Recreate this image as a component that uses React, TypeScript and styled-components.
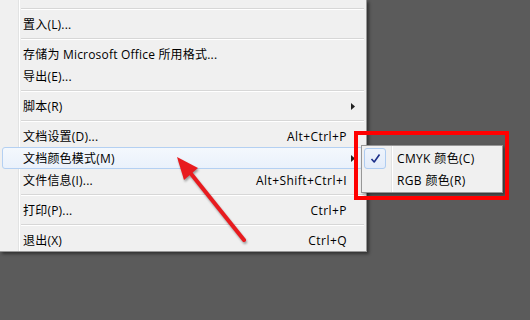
import React, { FunctionComponent } from "react"
import styled, { createGlobalStyle, css } from "styled-components"

const GlobalStyle = createGlobalStyle`
  html, body {
    margin: 0;
    padding: 0;
    background: #5b5b5b;
    overflow: hidden;
  }
`

const FONT = `"Open Sans", "Noto Sans CJK SC", sans-serif`

const Stage = styled.div`
  position: relative;
  width: 530px;
  height: 320px;
  background: #5b5b5b;
  font-family: ${FONT};
  font-size: 12px;
  letter-spacing: 0.2px;
  color: #000;
  overflow: hidden;
`

const Menu = styled.div`
  width: 366px;
  padding-top: 5px;
  background-color: #f0f0f0;
  background-image: linear-gradient(
    to right,
    transparent 18px,
    #e2e3e3 18px,
    #e2e3e3 19px,
    #ffffff 19px,
    #ffffff 20px,
    transparent 20px
  );
  border-right: 1px solid #979797;
  border-bottom: 1px solid #979797;
  box-shadow: 2px 2px 3px rgba(0, 0, 0, 0.45);
`

const Item = styled.div<{ $active?: boolean }>`
  display: flex;
  align-items: center;
  height: 20px;
  margin: 0 3px 0 2px;
  padding-left: 20px;
  border: 1px solid transparent;
  border-radius: 3px;
  white-space: nowrap;
  ${(p) =>
    p.$active &&
    css`
      border-color: #b4d0f2;
      background: linear-gradient(to bottom, #f4f8fd, #eaf1fb);
    `}
`

const Label = styled.span`
  flex: 1;
`

const Shortcut = styled.span`
  text-align: right;
  letter-spacing: 0.45px;
`

const ArrowSlot = styled.span`
  display: flex;
  align-items: center;
  width: 15px;
  padding-left: 4px;
  box-sizing: border-box;
`

const Separator = styled.div`
  height: 8px;
  margin: 0 2px 0 21px;
  background: linear-gradient(
    to bottom,
    transparent 3px,
    #d7d7d7 3px,
    #d7d7d7 4px,
    #ffffff 4px,
    #ffffff 5px,
    transparent 5px
  );
`

const SubMenu = styled.div`
  position: absolute;
  left: 361px;
  top: 145px;
  width: 140px;
  padding: 1px 0;
  background-color: #f0f0f0;
  background-image: linear-gradient(
    to right,
    transparent 29px,
    #e2e3e3 29px,
    #e2e3e3 30px,
    #ffffff 30px,
    #ffffff 31px,
    transparent 31px
  );
  border: 1px solid #979797;
  box-shadow: 2px 2px 3px rgba(0, 0, 0, 0.4);
`

const SubItem = styled.div`
  display: flex;
  align-items: center;
  height: 22px;
  padding-left: 2px;
  white-space: nowrap;
  letter-spacing: 0.35px;
`

const CheckSlot = styled.span<{ $checked?: boolean }>`
  display: flex;
  align-items: center;
  justify-content: center;
  width: 20px;
  height: 19px;
  margin-right: 11px;
  border: 1px solid transparent;
  border-radius: 3px;
  ${(p) =>
    p.$checked &&
    css`
      border-color: #aeccf1;
      background: linear-gradient(to bottom, #eef4fc, #e3ecfa);
    `}
`

const Callout = styled.div`
  position: absolute;
  left: 354px;
  top: 131px;
  width: 147px;
  height: 61px;
  border: 4px solid #ff0000;
  pointer-events: none;
`

const Pointer = styled.svg`
  position: absolute;
  left: 0;
  top: 0;
  width: 530px;
  height: 320px;
  pointer-events: none;
  filter: drop-shadow(1px 2px 1px rgba(0, 0, 0, 0.35));
`

const SubArrow: FunctionComponent = () => (
  <svg width="4" height="7" viewBox="0 0 4 7">
    <path d="M0 0 L4 3.5 L0 7 Z" fill="#222" />
  </svg>
)

const Check: FunctionComponent = () => (
  <svg width="11" height="11" viewBox="0 0 11 11">
    <path
      d="M1.5 6 L4.2 9 L9.5 1.5"
      fill="none"
      stroke="#1c2f8a"
      strokeWidth="1.6"
      strokeLinejoin="round"
    />
  </svg>
)

type Entry =
  | { sep: true }
  | { label: string; shortcut?: string; sub?: boolean; active?: boolean }

const entries: Entry[] = [
  { sep: true },
  { label: "置入(L)..." },
  { sep: true },
  { label: "存储为 Microsoft Office 所用格式..." },
  { label: "导出(E)..." },
  { sep: true },
  { label: "脚本(R)", sub: true },
  { sep: true },
  { label: "文档设置(D)...", shortcut: "Alt+Ctrl+P" },
  { label: "文档颜色模式(M)", sub: true, active: true },
  { label: "文件信息(I)...", shortcut: "Alt+Shift+Ctrl+I" },
  { sep: true },
  { label: "打印(P)...", shortcut: "Ctrl+P" },
  { sep: true },
  { label: "退出(X)", shortcut: "Ctrl+Q" },
]

export default function App() {
  return (
    <Stage>
      <GlobalStyle />
      <Menu>
        {entries.map((e, i) =>
          "sep" in e ? (
            <Separator key={i} />
          ) : (
            <Item key={i} $active={e.active}>
              <Label>{e.label}</Label>
              {e.shortcut && <Shortcut>{e.shortcut}</Shortcut>}
              <ArrowSlot>{e.sub && <SubArrow />}</ArrowSlot>
            </Item>
          )
        )}
      </Menu>

      <SubMenu>
        <SubItem>
          <CheckSlot $checked>
            <Check />
          </CheckSlot>
          CMYK 颜色(C)
        </SubItem>
        <SubItem>
          <CheckSlot />
          RGB 颜色(R)
        </SubItem>
      </SubMenu>

      <Callout />

      <Pointer viewBox="0 0 530 320">
        <line
          x1="244"
          y1="240"
          x2="188"
          y2="170"
          stroke="#e81b1f"
          strokeWidth="4"
          strokeLinecap="round"
        />
        <path d="M177 157 L198 168 L184 180 Z" fill="#e81b1f" />
      </Pointer>
    </Stage>
  )
}
